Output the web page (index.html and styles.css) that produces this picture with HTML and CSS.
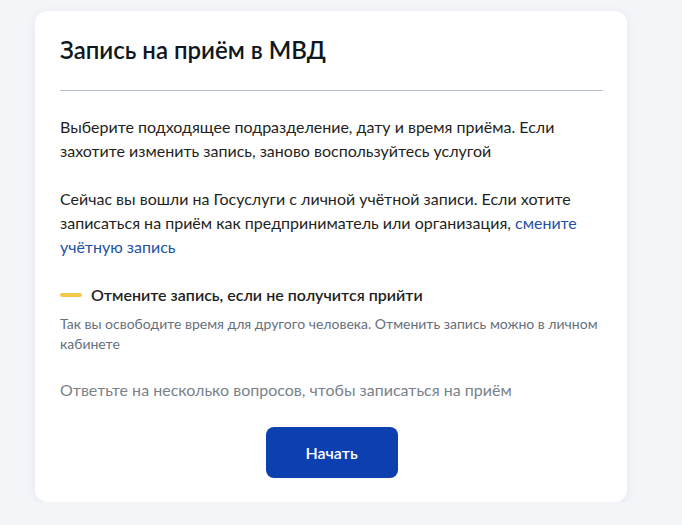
FILE: index.html
```html
<!DOCTYPE html>
<html lang="ru">
<head>
  <meta charset="UTF-8">
  <meta name="viewport" content="width=device-width, initial-scale=1.0">
  <title>Запись на приём в МВД</title>
  <link rel="stylesheet" href="styles.css">
</head>

<body>

  <div class="card">
    <h1 class="card-title">Запись на приём в МВД</h1>

    <p class="text">Выберите подходящее подразделение, дату и время приёма. Если захотите изменить запись, заново воспользуйтесь услугой</p>

    <p class="text">Сейчас вы вошли на Госуслуги с личной учётной записи. Если хотите записаться на приём как предприниматель или организация, <a href="#" class="link">смените учётную запись</a></p>

    <div class="notice">
      <div class="notice-head">
        <span class="notice-mark"></span>
        <span>Отмените запись, если не получится прийти</span>
      </div>
      <p class="notice-text">Так вы освободите время для другого человека. Отменить запись можно в личном кабинете</p>
    </div>

    <p class="text muted">Ответьте на несколько вопросов, чтобы записаться на приём</p>

    <div class="actions">
      <button class="btn">Начать</button>
    </div>
  </div>

</body>
</html>
```

FILE: styles.css
```css
body {
  font-family: Lato, 'Open Sans', sans-serif;
  background-color: #f3f5f9;
  margin: 0;
  padding: 11px 0 0 35px;
  color: #1f1f22;
}

.card {
  width: 592px;
  box-sizing: border-box;
  background-color: white;
  border-radius: 12px;
  padding: 24px 24px 24px 25px;
  box-shadow: 0 2px 10px rgba(40, 60, 100, 0.08);
}

.card-title {
  font-size: 24px;
  font-weight: 600;
  line-height: 30px;
  margin: 0;
  padding-bottom: 25px;
  border-bottom: 1px solid #b9c3cf;
  color: #0f1720;
}

.text {
  font-size: 16px;
  line-height: 24px;
  margin: 24px 0 0;
}

.text.muted {
  color: #7a828b;
}

.link {
  color: #2452a4;
  text-decoration: none;
}

.notice {
  margin-top: 24px;
}

.notice-head {
  display: flex;
  align-items: center;
  gap: 9px;
  font-size: 16px;
  font-weight: 600;
  line-height: 24px;
}

.notice-mark {
  width: 22px;
  height: 4px;
  border-radius: 2px;
  background-color: #f2c94a;
}

.notice-text {
  font-size: 14px;
  line-height: 20px;
  color: #66707b;
  margin: 7px 0 0;
}

.actions {
  display: flex;
  justify-content: center;
  margin-top: 25px;
}

.btn {
  font-family: inherit;
  font-size: 16px;
  font-weight: 600;
  color: white;
  background-color: #0c40b0;
  border: none;
  border-radius: 8px;
  width: 132px;
  height: 51px;
  cursor: pointer;
}

.btn:hover {
  background-color: #0a3796;
}
```
